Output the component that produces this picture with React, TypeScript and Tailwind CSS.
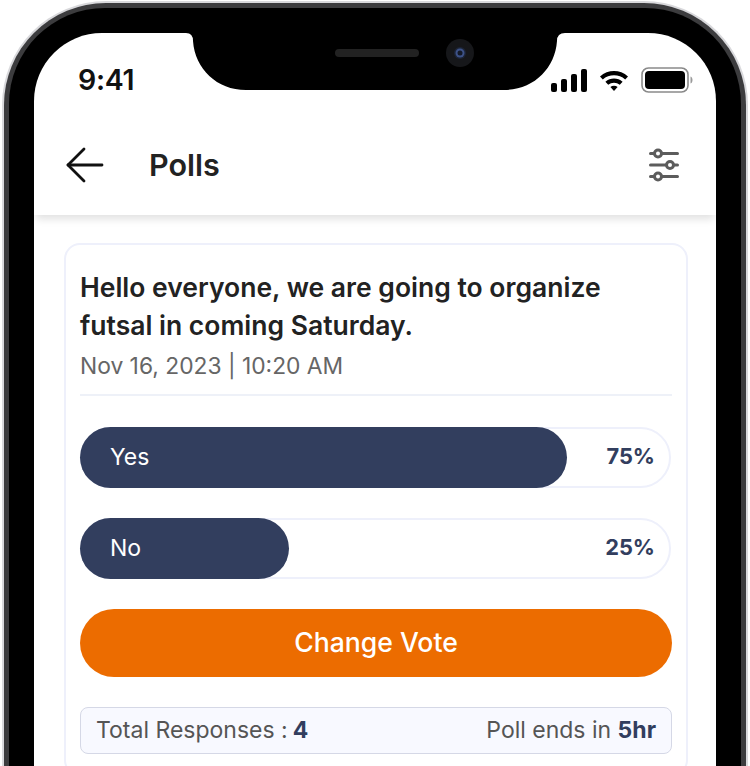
type PollOption = { label: string; percent: string; fill: string };

const options: PollOption[] = [
  { label: "Yes", percent: "75%", fill: "w-[487px]" },
  { label: "No", percent: "25%", fill: "w-[209px]" },
];

function Notch() {
  return (
    <svg className="absolute left-0 top-0" width="682" height="60" viewBox="0 0 682 60">
      <path
        d="M150 0H152Q159 0 159 8C161 36 183 57 212 57H470C499 57 521 36 523 8Q523 0 531 0H533V-1H150Z"
        fill="#000"
      />
      <rect x="301" y="16" width="84" height="8" rx="4" fill="#222" />
      <circle cx="426" cy="20" r="14" fill="#16171a" />
      <circle cx="426" cy="20" r="6" fill="#1c2436" />
      <circle cx="426" cy="20" r="4.500" fill="#3d5288" />
      <circle cx="426" cy="20" r="2.500" fill="#141a28" />
    </svg>
  );
}

function SignalIcon() {
  return (
    <svg width="36" height="23" viewBox="0 0 36 23">
      <rect x="0" y="14" width="6" height="9" rx="2" fill="#000" />
      <rect x="10" y="10" width="6" height="13" rx="2" fill="#000" />
      <rect x="20" y="5" width="6" height="18" rx="2" fill="#000" />
      <rect x="30" y="0" width="6" height="23" rx="2" fill="#000" />
    </svg>
  );
}

function WifiIcon() {
  return (
    <svg width="30" height="22" viewBox="0 0 30 22">
      <path d="M1 7.500C9 0.200 21 0.200 29 7.500L26.200 10.400C20 5 10 5 3.800 10.400Z" fill="#000" />
      <path d="M6.400 12.800C11.400 8.500 18.600 8.500 23.600 12.800L20.800 15.700C17.400 13 12.600 13 9.200 15.700Z" fill="#000" />
      <path d="M11.400 18C13.400 16.400 16.600 16.400 18.600 18L15 22Z" fill="#000" />
    </svg>
  );
}

function BatteryIcon() {
  return (
    <svg width="52" height="26" viewBox="0 0 52 26">
      <rect x="1" y="1" width="46" height="24" rx="6.500" fill="none" stroke="#8a8a8a" strokeWidth="1.600" />
      <rect x="4" y="4" width="40" height="18" rx="4" fill="#000" />
      <path d="M49.500 9.500C51 10 51.500 11.500 51.500 13C51.500 14.500 51 16 49.500 16.500Z" fill="#9a9a9a" />
    </svg>
  );
}

function BackArrow() {
  return (
    <svg width="40" height="36" viewBox="0 0 40 36" fill="none" stroke="#111" strokeWidth="2.800" strokeLinecap="round" strokeLinejoin="round">
      <path d="M37 18H3" />
      <path d="M19 2L3 18L19 34" />
    </svg>
  );
}

function FilterIcon() {
  return (
    <svg className="mt-[1px]" width="30" height="34" viewBox="0 0 30 34" fill="none" stroke="#5c5c5c" strokeWidth="3" strokeLinecap="round">
      <path d="M1.500 5.500H4.500M13.500 5.500H28.500" />
      <circle cx="9" cy="5.500" r="3.500" />
      <path d="M1.500 17H16.500M25.500 17H28.500" />
      <circle cx="21" cy="17" r="3.500" />
      <path d="M1.500 28.500H4.500M13.500 28.500H28.500" />
      <circle cx="9" cy="28.500" r="3.500" />
    </svg>
  );
}

export default function App() {
  return (
    <div className="h-[766px] w-[750px] overflow-hidden bg-white font-['Inter',sans-serif]">
      <div className="ml-[2px] mt-[1px] h-[900px] w-[746px] rounded-t-[104px] border-[2px] border-b-0 border-[#d9d9dc] bg-[#3c3c3e] px-[5px] pt-[5px]">
        <div className="h-full rounded-t-[96px] bg-black px-[25px] pt-[25px]">
          <div className="relative h-full w-[682px] overflow-hidden rounded-t-[68px] bg-white">
            <Notch />
            <div className="flex h-[77px] items-end justify-between pb-[13px] pl-[44px] pr-[23px]">
              <span className="text-[28.500px] font-semibold leading-[34px] tracking-[-0.3px] text-[#111]">9:41</span>
              <div className="mb-[4px] flex items-center gap-[12px]">
                <SignalIcon />
                <WifiIcon />
                <BatteryIcon />
              </div>
            </div>
            <header className="flex h-[105px] items-start justify-between pl-[31px] pr-[37px] pt-[37px] shadow-[0_6px_8px_-2px_rgba(0,0,0,0.12)]">
              <div className="flex items-center gap-[44px]">
                <BackArrow />
                <h1 className="text-[30.500px] font-semibold leading-[36px] text-[#222]">Polls</h1>
              </div>
              <FilterIcon />
            </header>
            <section className="ml-[30px] mr-[28px] mt-[28px] rounded-[16px] border-[2px] border-[#eef0fb] bg-white px-[14px] pb-[20px] pt-[23px]">
              <h2 className="text-[26.500px] font-semibold leading-[38px] text-[#222]">
                Hello everyone, we are going to organize futsal in coming Saturday.
              </h2>
              <p className="mt-[6px] border-b-[2px] border-[#eef1f8] pb-[12px] text-[22.800px] leading-[32px] text-[#666]">
                Nov 16, 2023 | 10:20 AM
              </p>
              <div className="mt-[31px] flex flex-col gap-[30px]">
                {options.map((option) => (
                  <div
                    key={option.label}
                    className="mr-[1px] flex h-[61px] items-center justify-between rounded-full border-[2px] border-[#eef0fb] pr-[14px]"
                  >
                    <div className={`-ml-[2px] flex h-[61px] items-center rounded-full bg-[#323e5e] pl-[30px] text-[23px] text-white ${option.fill}`}>
                      {option.label}
                    </div>
                    <span className="pb-[2px] text-[21.800px] font-bold leading-none text-[#323e5e]">{option.percent}</span>
                  </div>
                ))}
              </div>
              <button className="mt-[30px] h-[68px] w-full rounded-full bg-[#ec6c00] text-[26.600px] font-medium text-white">
                Change Vote
              </button>
              <div className="mt-[30px] flex h-[47px] items-center justify-between rounded-[8px] border-[1.500px] border-[#d5d8e6] bg-[#f8f9ff] px-[15px] text-[23px] text-[#555]">
                <span>
                  Total Responses :<b className="ml-[5px] font-bold text-[#323e5e]">4</b>
                </span>
                <span>
                  Poll ends in <b className="font-bold text-[#323e5e]">5hr</b>
                </span>
              </div>
            </section>
          </div>
        </div>
      </div>
    </div>
  );
}
